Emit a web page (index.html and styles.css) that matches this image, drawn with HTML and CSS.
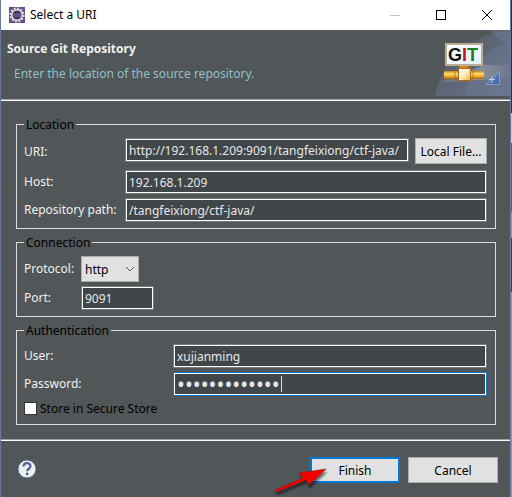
FILE: index.html
```html
<!DOCTYPE html>
<html lang="en">
<head>
<meta charset="utf-8">
<title>Select a URI</title>
<link rel="stylesheet" href="styles.css">
</head>
<body>
<div class="dialog">
  <header class="titlebar">
    <svg class="app-icon" width="16" height="16" viewBox="0 0 16 16" aria-hidden="true">
      <rect width="16" height="16" fill="#624c8c"/>
      <circle cx="8" cy="8" r="6.6" fill="none" stroke="#d9d5d5" stroke-width="2" stroke-dasharray="2 1.45"/>
      <circle cx="8" cy="8" r="5.3" fill="#40365f" stroke="#e6e2de" stroke-width="1.5"/>
      <path d="M4 7h8M4 9h8" stroke="#7a719b" stroke-width="1"/>
    </svg>
    <h1 class="window-title">Select a URI</h1>
    <div class="window-controls">
      <button class="window-button" type="button" aria-label="Minimize" disabled>
        <svg width="12" height="12" viewBox="0 0 12 12"><path d="M1 6.5h10" stroke="#c4c4c4"/></svg>
      </button>
      <button class="window-button" type="button" aria-label="Maximize">
        <svg width="12" height="12" viewBox="0 0 12 12"><rect x="1.5" y="1.5" width="9" height="9" fill="none" stroke="#000"/></svg>
      </button>
      <button class="window-button" type="button" aria-label="Close">
        <svg width="12" height="12" viewBox="0 0 12 12"><path d="M1 1l10 10M11 1L1 11" stroke="#000"/></svg>
      </button>
    </div>
  </header>
  <section class="banner">
    <div class="banner-text">
      <h2 class="banner-title">Source Git Repository</h2>
      <p class="banner-message">Enter the location of the source repository.</p>
    </div>
    <svg class="banner-art" width="75" height="66" viewBox="0 0 75 66" role="img" aria-label="Git">
      <defs>
        <linearGradient id="sky" x1="0" y1="0" x2="1" y2="1"><stop offset="0" stop-color="#525759"/><stop offset=".5" stop-color="#5e6575"/><stop offset="1" stop-color="#68728c"/></linearGradient>
        <linearGradient id="beam" x1="0" y1="0" x2="1" y2="0"><stop offset="0" stop-color="#888d94" stop-opacity=".3"/><stop offset=".6" stop-color="#969aa3"/><stop offset="1" stop-color="#70788a"/></linearGradient>
        <linearGradient id="pipe" x1="0" y1="0" x2="0" y2="1"><stop offset="0" stop-color="#c8860c"/><stop offset=".35" stop-color="#ffdf70"/><stop offset=".65" stop-color="#eeb02a"/><stop offset="1" stop-color="#a86400"/></linearGradient>
        <linearGradient id="cube" x1="0" y1="0" x2="1" y2="1"><stop offset="0" stop-color="#fff"/><stop offset=".5" stop-color="#fff0bd"/><stop offset="1" stop-color="#e8ad32"/></linearGradient>
        <linearGradient id="plate" x1="0" y1="0" x2="1" y2="1"><stop offset="0" stop-color="#fff"/><stop offset="1" stop-color="#e4effa"/></linearGradient>
        <linearGradient id="sail" x1="0" y1="0" x2="1" y2="1"><stop offset="0" stop-color="#7d98cd"/><stop offset="1" stop-color="#3c5fa6"/></linearGradient>
      </defs>
      <path d="M0 66C6 30 34 5 75 0v66z" fill="url(#sky)"/>
      <path d="M30 66C31 42 48 20 75 11v55z" fill="#7580a0" opacity=".3"/>
      <path d="M55 0h20v13C67 12 60 7 55 0z" fill="#7b88a5" opacity=".35"/>
      <path d="M2 53L50 35h25v13z" fill="url(#beam)" opacity=".7"/>
      <rect x="11" y="14" width="36" height="21" fill="url(#plate)" stroke="#b9ad93" stroke-width="2"/>
      <text class="art-letters" x="13" y="31"><tspan fill="#111">G</tspan><tspan fill="#c5121b">I</tspan><tspan fill="#118119">T</tspan></text>
      <path d="M25 36h8l2 4H23z" fill="#d58b12"/>
      <rect x="9" y="41" width="40" height="8" fill="url(#pipe)"/>
      <path d="M20 41v8M38 41v8" stroke="#a86a06" opacity=".7"/>
      <rect x="23.500" y="38.500" width="12" height="12" fill="url(#cube)" stroke="#a86a17"/>
      <path d="M64.500 41.500v13H51z" fill="url(#sail)" stroke="#8ba2cf" stroke-width=".8"/>
      <path d="M57 46.500v6M54 49.500h6" stroke="#dce9ff" opacity=".8"/>
    </svg>
  </section>
  <form class="form">
    <div class="groups">
      <fieldset class="group">
        <legend>Location</legend>
        <div class="rows rows-location">
          <label for="uri">URI:</label>
          <div class="uri-row">
            <input class="field" id="uri" type="text" value="http://192.168.1.209:9091/tangfeixiong/ctf-java/">
            <button class="button" type="button">Local File...</button>
          </div>
          <label for="host">Host:</label>
          <input class="field" id="host" type="text" value="192.168.1.209">
          <label for="path">Repository path:</label>
          <input class="field" id="path" type="text" value="/tangfeixiong/ctf-java/">
        </div>
      </fieldset>
      <fieldset class="group">
        <legend>Connection</legend>
        <div class="rows rows-connection">
          <label for="protocol">Protocol:</label>
          <div class="select-wrap">
            <select class="select" id="protocol"><option>http</option></select>
            <svg class="chevron" width="10" height="6" viewBox="0 0 10 6" aria-hidden="true"><path d="M1 1l4 4 4-4" fill="none" stroke="#555"/></svg>
          </div>
          <label for="port">Port:</label>
          <input class="field field-port" id="port" type="text" value="9091">
        </div>
      </fieldset>
      <fieldset class="group">
        <legend>Authentication</legend>
        <div class="rows rows-auth">
          <label for="user">User:</label>
          <input class="field" id="user" type="text" value="xujianming">
          <label for="password">Password:</label>
          <div class="password-wrap">
            <input class="field field-password" id="password" type="password" value="abcdefghijklm">
            <span class="caret"></span>
          </div>
          <label class="store"><input class="checkbox" type="checkbox">Store in Secure Store</label>
        </div>
      </fieldset>
    </div>
    <footer class="footer">
      <button class="help" type="button" aria-label="Help">
        <svg width="20" height="20" viewBox="0 0 20 20"><circle cx="10" cy="10" r="9" fill="#f0f0f0" stroke="#526b94"/><path d="M6.500 7.500C6.500 3 13.500 3 13.500 7.200c0 2.600-3.300 2.500-3.300 5" fill="none" stroke="#4c6290" stroke-width="2.200"/><circle cx="10.200" cy="15" r="1.400" fill="#4c6290"/></svg>
      </button>
      <div class="actions">
        <button class="button button-action button-default" type="submit">Finish</button>
        <button class="button button-action" type="button">Cancel</button>
        <svg class="pointer" width="56" height="32" viewBox="0 0 56 32" aria-hidden="true">
          <path d="M1 25L29 13 25 8 52 4 35 20 32 15 2 27z" fill="#f50000" stroke="#8e1717" stroke-width=".6"/>
        </svg>
      </div>
    </footer>
  </form>
</div>
</body>
</html>
```

FILE: styles.css
```css
* {
  box-sizing: border-box;
}

body {
  margin: 0;
  background: linear-gradient(#28313d 113px, #c5c8d2 113px 143px, #566076 143px 212px, #9296a3 212px 238px, #394149 238px 292px, #9296a3 292px);
  color: #f0f0f0;
  font: 12px/17px "Noto Sans", "Open Sans", sans-serif;
}

button,
input,
select {
  margin: 0;
  font: inherit;
}

.dialog {
  display: flex;
  flex-direction: column;
  min-height: 100vh;
  margin-right: 1px;
  border: solid #687b99;
  border-width: 0 1px;
  background: #515658;
}

.titlebar {
  display: flex;
  align-items: center;
  height: 30px;
  padding-left: 8px;
  background: #fff;
  color: #000;
}

.window-title {
  margin: 0 0 0 5px;
  padding-bottom: 2px;
  font-size: 12px;
  font-weight: 400;
}

.window-controls {
  display: flex;
  margin-left: auto;
}

.window-button {
  display: flex;
  align-items: center;
  justify-content: center;
  width: 46px;
  height: 28px;
  padding: 0;
  border: 0;
  background: none;
}

.banner {
  display: flex;
  align-items: flex-start;
  justify-content: space-between;
  height: 71px;
  border-bottom: 1px solid #fff;
  box-shadow: inset 0 -1px #a3a0a3;
}

.banner-text {
  padding: 10px 0 0 6px;
}

.banner-title {
  margin: 0;
  font-size: 12px;
  font-weight: 700;
}

.banner-message {
  margin: 8px 0 0 7px;
  color: #8fc0ca;
}

.art-letters {
  font: 700 18px "Liberation Sans", sans-serif;
}

.form {
  display: flex;
  flex: 1;
  flex-direction: column;
}

.groups {
  display: flex;
  flex-direction: column;
  gap: 5px;
  padding: 15px 14px 15px 15px;
}

.group {
  min-width: 0;
  margin: 0;
  padding: 5px 8px 6px 7px;
  border: 1px solid #dcdcdc;
}

.group legend {
  padding: 0 2px;
  color: #000;
}

.rows {
  display: grid;
  row-gap: 4px;
  align-items: center;
}

.rows label {
  padding-bottom: 2px;
}

.rows-location {
  grid-template-columns: 101px 1fr;
}

.rows-connection {
  grid-template-columns: 57px 1fr;
}

.rows-auth {
  grid-template-columns: 149px 1fr;
}

.uri-row {
  display: flex;
  gap: 6px;
  align-items: flex-start;
  height: 28px;
}

.field {
  width: 100%;
  min-width: 0;
  height: 24px;
  padding: 0 3px;
  border: 1px solid #7a7a7a;
  outline: 1px solid #fff;
  outline-offset: -2px;
  border-radius: 0;
  background: #41464a;
  color: #e6e6e6;
}

.field-port {
  width: 73px;
}

.field-password {
  display: block;
  border-color: #0078d7;
  font-size: 21px;
}

.password-wrap,
.select-wrap {
  position: relative;
}

.caret {
  position: absolute;
  top: 4px;
  left: 108px;
  width: 1px;
  height: 16px;
  background: #d8d8d8;
}

.button {
  flex: none;
  height: 26px;
  padding: 0 4px;
  border: 1px solid #adadad;
  background: #e1e1e1;
  color: #000;
}

.uri-row .button {
  min-width: 72px;
  padding: 0 3px;
}

.select-wrap {
  width: 58px;
}

.select {
  display: block;
  width: 100%;
  height: 26px;
  padding: 0 3px;
  border: 1px solid #adadad;
  border-radius: 0;
  background: #e1e1e1;
  color: #000;
  appearance: none;
}

.chevron {
  position: absolute;
  top: 10px;
  right: 4px;
  pointer-events: none;
}

.store {
  display: flex;
  grid-column: 1 / -1;
  gap: 3px;
  align-items: center;
  height: 18px;
  color: #000;
}

.checkbox {
  width: 13px;
  height: 13px;
  border: 1px solid #333;
  background: #fff;
  appearance: none;
}

.footer {
  display: flex;
  flex: 1;
  align-items: flex-start;
  justify-content: space-between;
  padding: 16px 12px 13px 16px;
  border-top: 1px solid #fff;
  box-shadow: 0 -1px #a3a0a3;
}

.help {
  display: flex;
  margin-top: 2px;
  padding: 0;
  border: 0;
  background: none;
}

.actions {
  position: relative;
  display: flex;
  gap: 8px;
}

.button-action {
  width: 90px;
}

.button-default {
  border: 2px solid #0078d7;
}

.pointer {
  position: absolute;
  top: 8px;
  left: -36px;
  filter: drop-shadow(1px 3px 1px #0008);
  pointer-events: none;
}
```
